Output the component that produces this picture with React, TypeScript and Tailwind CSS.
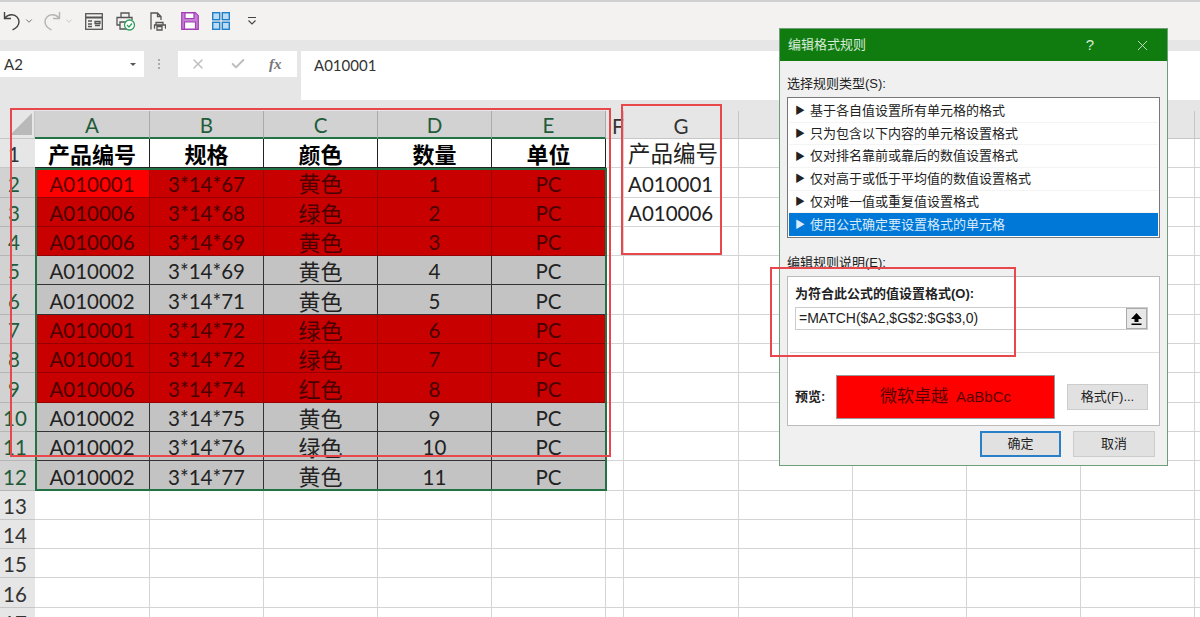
import React from "react";
import { ChevronDown, X, Check } from "lucide-react";

const cjk = "font-['Liberation_Sans','Noto_Sans_CJK_SC',sans-serif]";
const lato = "font-['Lato','Noto_Sans_CJK_SC',sans-serif]";
const colsTpl = "grid grid-cols-[35px_115px_114px_114px_114px_114px_18px_115px_114px_114px_114px_114px_115px]";

type Row = [string, string, string, string, boolean];
const rows: Row[] = [
  ["A010001", "3*14*67", "黄色", "1", true],
  ["A010006", "3*14*68", "绿色", "2", true],
  ["A010006", "3*14*69", "黄色", "3", true],
  ["A010002", "3*14*69", "黄色", "4", false],
  ["A010002", "3*14*71", "黄色", "5", false],
  ["A010001", "3*14*72", "绿色", "6", true],
  ["A010001", "3*14*72", "绿色", "7", true],
  ["A010006", "3*14*74", "红色", "8", true],
  ["A010002", "3*14*75", "黄色", "9", false],
  ["A010002", "3*14*76", "绿色", "10", false],
  ["A010002", "3*14*77", "黄色", "11", false],
];

const g: Record<number, string> = { 2: "A010001", 3: "A010006" };

function UndoIcon({ color }: { color: string }) {
  return (
    <svg width="18" height="20" viewBox="0 0 18 20" fill="none" stroke={color} strokeWidth="1.4">
      <path d="M1.5 1v6.5H8" />
      <path d="M1.8 7.2C4 4.5 6.5 3.6 9 3.8c4 .3 7 3.3 7 7 0 3.400-2.500 6.200-6.500 8" />
    </svg>
  );
}
function RedoIcon({ color }: { color: string }) {
  return (
    <svg width="18" height="20" viewBox="0 0 18 20" fill="none" stroke={color} strokeWidth="1.4">
      <path d="M16.500 1v6.500H10" />
      <path d="M16.200 7.200C14 4.500 11.500 3.600 9 3.800c-4 .3-7 3.300-7 7 0 3.400 2.500 6.200 6.500 8" />
    </svg>
  );
}
function FormIcon() {
  return (
    <svg width="18" height="17" viewBox="0 0 18 17" fill="none" stroke="#555" strokeWidth="1.3">
      <rect x="0.7" y="0.7" width="16.6" height="15.6" />
      <path d="M1 4.500h16" strokeWidth="2" />
      <path d="M3 8h4M3 11h4M3 13.500h4M10 8.500h5v2h-5zM10 12.500h5" />
    </svg>
  );
}
function PrintCheck() {
  return (
    <svg width="20" height="19" viewBox="0 0 20 19" fill="none" stroke="#555" strokeWidth="1.3">
      <path d="M5 5V1h8v4M4 13H1V5.500h15V8M4 10h6v7H4z" />
      <circle cx="13.500" cy="13" r="5" fill="#fff" stroke="#2e9e5b" />
      <path d="M11 13l2 2 3-3.500" stroke="#2e9e5b" />
    </svg>
  );
}
function PrintPreview() {
  return (
    <svg width="17" height="19" viewBox="0 0 17 19" fill="none" stroke="#555" strokeWidth="1.3">
      <path d="M2 17.500V1h6.500L12 4.500V8M8.500 1v3.500H12" />
      <path d="M7 13v-2.500h7V13M6 16h-.5v-3h11v3H16M8 14.500h5v3.500H8z" />
    </svg>
  );
}
function SaveIcon() {
  return (
    <svg width="18" height="18" viewBox="0 0 18 18" fill="#c77fd6" stroke="#a03fb5" strokeWidth="1.2">
      <path d="M0.700 0.700h13.600l3 3v13.600H0.700z" />
      <path d="M4 1v5.500h9V1z" fill="#fff" />
      <path d="M3.500 17v-7h11v7z" fill="#fff" />
    </svg>
  );
}
function GridIcon() {
  return (
    <svg width="18" height="18" viewBox="0 0 18 18" fill="#bcdcf5" stroke="#1f7fc9" strokeWidth="1.4">
      <rect x="0.700" y="0.700" width="7" height="7" />
      <rect x="10.300" y="0.700" width="7" height="7" />
      <rect x="0.700" y="10.300" width="7" height="7" />
      <rect x="10.300" y="10.300" width="7" height="7" />
    </svg>
  );
}
function QatMore() {
  return (
    <svg width="10" height="10" viewBox="0 0 10 10" fill="none" stroke="#444" strokeWidth="1.1">
      <path d="M1 1.500h8M1.500 4.500L5 8l3.500-3.500" />
    </svg>
  );
}
function UploadArrow() {
  return (
    <svg width="13" height="14" viewBox="0 0 13 14" fill="#000">
      <path d="M6.500 1L12 7H8.500v3h-4V7H1z" />
      <rect x="1.500" y="11.500" width="10" height="1.500" />
    </svg>
  );
}

function Toolbar() {
  return (
    <div className="flex h-[38px] items-center bg-[#f3f2f1] pl-[3px]">
      <UndoIcon color="#444" />
      <ChevronDown size={10} strokeWidth={2} className="ml-[3px] text-[#555]" />
      <span className="ml-[9px]"><RedoIcon color="#b4b4b4" /></span>
      <ChevronDown size={10} strokeWidth={2} className="ml-[3px] text-[#c0c0c0]" />
      <span className="ml-[11px]"><FormIcon /></span>
      <span className="ml-[13px]"><PrintCheck /></span>
      <span className="ml-[13px]"><PrintPreview /></span>
      <span className="ml-[15px]"><SaveIcon /></span>
      <span className="ml-[13px]"><GridIcon /></span>
      <span className="ml-[17px]"><QatMore /></span>
    </div>
  );
}

function FormulaBar() {
  return (
    <div className="flex h-[71px] items-start bg-[#e6e6e6] pt-[11px]">
      <div className={`flex h-[26px] w-[144px] items-center justify-between bg-white pl-[4px] pr-[8px] text-[15px] text-[#333] ${lato}`}>
        <span>A2</span>
        <span className="h-0 w-0 border-x-[3px] border-t-[3px] border-x-transparent border-t-[#555]" />
      </div>
      <div className="mt-[8px] ml-[14px] flex w-[20px] flex-col items-start gap-[2px]">
        <span className="h-[2px] w-[2px] bg-[#aaa]" />
        <span className="h-[2px] w-[2px] bg-[#aaa]" />
        <span className="h-[2px] w-[2px] bg-[#aaa]" />
      </div>
      <div className="flex h-[26px] w-[119px] items-center bg-white pl-[12px] text-[#bdbdbd]">
        <X size={16} strokeWidth={2} />
        <Check size={16} strokeWidth={3} className="ml-[24px]" />
        <span className="ml-[23px] font-['Liberation_Serif',serif] text-[15px] font-bold italic text-[#777]">fx</span>
      </div>
      <div className={`ml-[4px] h-[49px] flex-1 bg-white pl-[13px] pt-[3px] text-[15px] text-[#333] ${lato}`}>A010001</div>
    </div>
  );
}

const hdrSel = "flex items-center justify-center border-r border-[#aaa] border-b-2 border-b-[#217346] bg-[#d2d2d2] pt-[3px] text-[#1f5c3a]";
const hdr = "flex items-center justify-center border-r border-[#c6c6c6] border-b border-b-[#c6c6c6] bg-[#e6e6e6] pt-[3px] text-[#333]";
const blank = "border-r border-b border-[#d4d4d4] bg-white";

function Sheet() {
  const tail = [0, 1, 2, 3, 4];
  return (
    <div className={`${colsTpl} grid-rows-[28px] auto-rows-[29.3px] whitespace-nowrap text-[20.5px] ${lato}`}>
      <div className="flex items-end justify-end border-r border-b border-[#c6c6c6] bg-[#e6e6e6] pb-[3px] pr-[2px]">
        <span className="h-0 w-0 border-b-[22px] border-l-[22px] border-b-[#b9b9b9] border-l-transparent" />
      </div>
      {["A", "B", "C", "D", "E"].map((c) => (
        <div key={c} className={hdrSel}>{c}</div>
      ))}
      <div className={`${hdr} justify-start pl-[6px]`}>F</div>
      <div className={hdr}>G</div>
      {tail.map((i) => <div key={i} className={hdr} />)}

      <div className="flex items-center justify-start border-b border-[#c6c6c6] bg-[#e6e6e6] pl-[8px] pt-[3px] text-[#333]">1</div>
      {["产品编号", "规格", "颜色", "数量", "单位"].map((t) => (
        <div key={t} className="flex items-center justify-center border-r border-b border-[#222] bg-white pt-[2px] text-[22px] font-bold text-black">{t}</div>
      ))}
      <div className={blank} />
      <div className={`${blank} flex items-center justify-start pl-[4px] pt-[2px] text-[22.5px] text-[#222]`}>产品编号</div>
      {tail.map((i) => <div key={i} className={blank} />)}

      {rows.map((r, i) => {
        const n = i + 2;
        const cell = r[4]
          ? "flex items-center justify-center overflow-hidden border-r border-b border-[#960000] bg-[#c80000] pt-[3px] text-[#480000]"
          : "flex items-center justify-center overflow-hidden border-r border-b border-[#333] bg-[#c3c3c3] pt-[3px] text-[#222]";
        return (
          <React.Fragment key={n}>
            <div className={`flex items-center border-b border-[#b5b5b5] bg-[#d2d2d2] pt-[3px] text-[#1f5c3a] ${n < 10 ? "justify-start pl-[8px]" : "justify-start pl-[3px]"}`}>{n}</div>
            {[r[0], r[1], r[2], r[3], "PC"].map((v, j) => (
              <div key={j} className={j === 0 && n === 2 ? "flex items-center justify-center border-r border-b border-[#960000] bg-[#ff0000] pt-[3px] text-[#580000]" : `${cell} ${j === 2 ? "text-[22px]" : ""}`}>{v}</div>
            ))}
            <div className={blank} />
            <div className={`${blank} flex items-center pl-[4px] pt-[3px] text-[#222]`}>{g[n] ?? ""}</div>
            {tail.map((k) => <div key={k} className={blank} />)}
          </React.Fragment>
        );
      })}

      {[13, 14, 15, 16, 17].map((n) => (
        <React.Fragment key={n}>
          <div className="flex items-center justify-start border-b border-[#c6c6c6] bg-[#e6e6e6] pl-[3px] pt-[3px] text-[#333]">{n}</div>
          {Array.from({ length: 12 }).map((_, j) => <div key={j} className={blank} />)}
        </React.Fragment>
      ))}
    </div>
  );
}

function Dialog() {
  const items = [
    "基于各自值设置所有单元格的格式",
    "只为包含以下内容的单元格设置格式",
    "仅对排名靠前或靠后的数值设置格式",
    "仅对高于或低于平均值的数值设置格式",
    "仅对唯一值或重复值设置格式",
    "使用公式确定要设置格式的单元格",
  ];
  return (
    <div className={`absolute left-[779px] top-[28px] flex h-[438px] w-[389px] flex-col border border-[#6f9f78] bg-[#f0f0f0] text-[13px] text-[#222] ${cjk}`}>
      <div className="flex h-[32px] shrink-0 items-center bg-[#107c10] pl-[8px] pr-[16px] text-[13px] text-[#d8ebd8]">
        <span className="flex-1">编辑格式规则</span>
        <span className="mr-[40px] text-[15px]">?</span>
        <X size={17} strokeWidth={1.2} />
      </div>
      <div className="px-[7px] pt-[14px]">
        <div className="h-[22px] leading-[18px]">选择规则类型(S):</div>
        <div className="h-[141px] border border-[#777] bg-white p-[1px] pt-[2px]">
          {items.map((t, i) => (
            <div key={t} className={`flex h-[22.7px] items-center pl-[6px] ${i === 5 ? "bg-[#0078d7] text-[#d8ebfa]" : "border-b border-[#f4f4f4]"}`}>
              <span className="mr-[5px] text-[10px]">▶</span>{t}
            </div>
          ))}
        </div>
        <div className="mt-[16px] h-[22px] leading-[18px]">编辑规则说明(E):</div>
        <div className="h-[150px] border border-[#bbb] bg-white px-[7px] pt-[8px]">
          <div className="h-[22px] font-bold leading-[18px]">为符合此公式的值设置格式(O):</div>
          <div className="flex h-[23px] w-[353px] items-center border border-[#ccc] pl-[3px]">
            <span className="flex-1 text-[14px] text-[#222]">=MATCH($A2,$G$2:$G$3,0)</span>
            <span className="flex h-[21px] w-[21px] items-center justify-center border border-[#aaa] bg-[#e8e8e8]">
              <UploadArrow />
            </span>
          </div>
          <div className="mt-[22px] h-px w-[369px] -translate-x-[5px] bg-[#ddd]" />
          <div className="mt-[22px] flex items-center">
            <span className="w-[41px] font-bold">预览:</span>
            <div className="flex h-[44px] w-[219px] items-center justify-center border border-[#999] bg-[#ff0000] text-[#580000]">
              <span className="text-[17px]">微软卓越</span><span className="ml-[8px] text-[15px]">AaBbCc</span>
            </div>
            <div className="ml-[12px] flex h-[26px] w-[81px] items-center justify-center border border-[#ccc] bg-[#e1e1e1]">格式(F)...</div>
          </div>
        </div>
        <div className="mt-[5px] flex justify-end gap-[12px] pr-[5px]">
          <div className="flex h-[26px] w-[81px] items-center justify-center border-2 border-[#2a7fc9] bg-[#e1e1e1]">确定</div>
          <div className="flex h-[26px] w-[82px] items-center justify-center border border-[#ccc] bg-[#e1e1e1]">取消</div>
        </div>
      </div>
    </div>
  );
}

export default function App() {
  return (
    <div className={`relative h-[617px] w-[1200px] overflow-hidden bg-white ${cjk}`}>
      <div className="h-[2px] bg-[#d0d0d0]" />
      <Toolbar />
      <FormulaBar />
      <Sheet />
      <div className="pointer-events-none absolute left-[35px] top-[168px] h-[323px] w-[572px] border-2 border-[#217346]" />
      <div className="pointer-events-none absolute left-[10px] top-[108px] h-[349px] w-[601px] border-2 border-[#e8474c]" />
      <div className="pointer-events-none absolute left-[621px] top-[104px] h-[151px] w-[101px] border-2 border-[#e8474c]" />
      <Dialog />
      <div className="pointer-events-none absolute left-[770px] top-[267px] h-[90px] w-[246px] border-2 border-[#e8474c]" />
    </div>
  );
}
